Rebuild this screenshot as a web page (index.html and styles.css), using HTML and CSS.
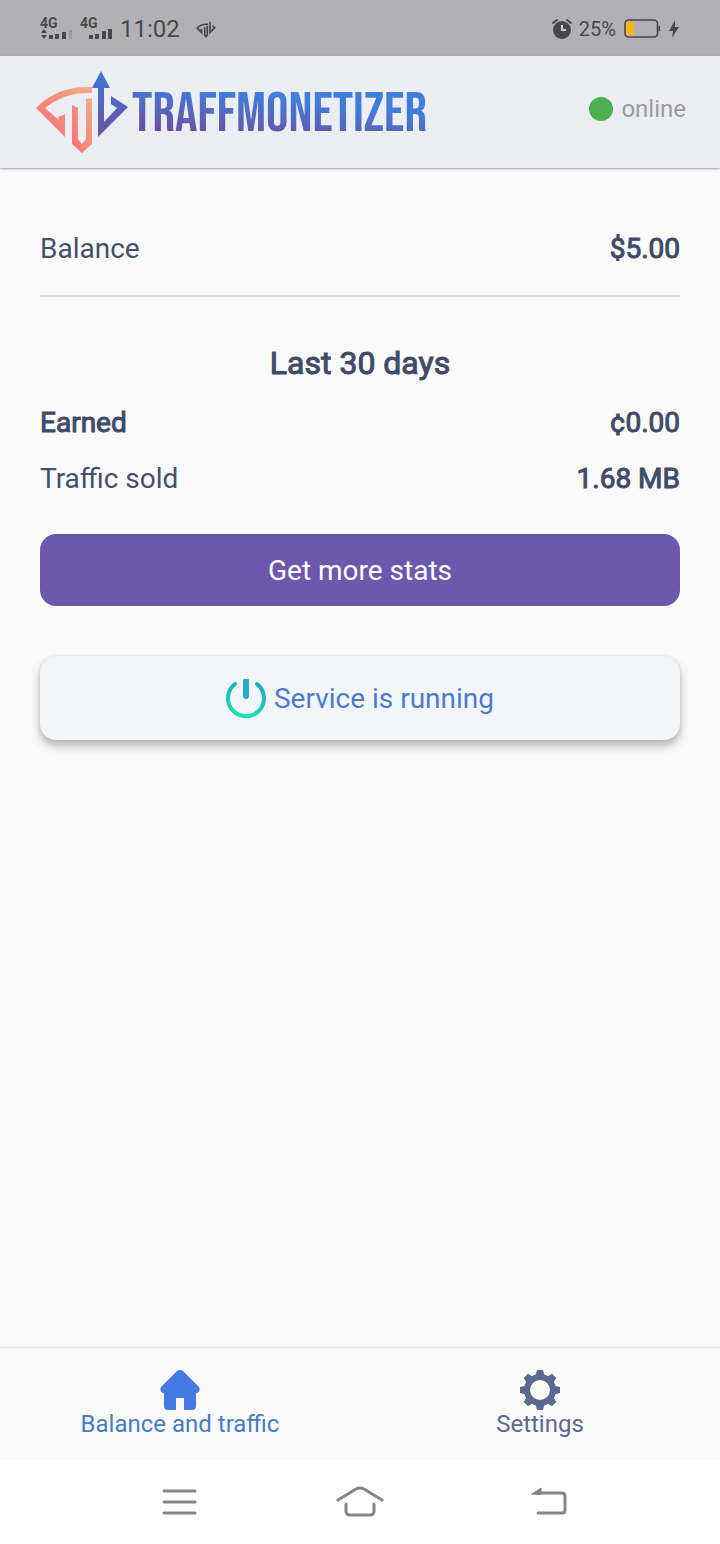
FILE: index.html
```html
<!DOCTYPE html>
<html lang="en">
<head>
  <meta charset="UTF-8">
  <meta name="viewport" content="width=device-width, initial-scale=1">
  <title>Traffmonetizer</title>
  <link rel="stylesheet" href="styles.css">
</head>
<body>

<!-- Phone status bar -->
<div class="status-bar">
  <div class="status-left">
    <div class="signal">
      <span class="network">4G</span>
      <svg width="32" height="12" viewBox="0 0 32 12">
        <path d="M1 4l3-4 3 4zM1 6l3 4 3-4z" fill="#48484b"/>
        <path d="M9 6h4v4H9zM15 5h4v5h-4zM22 3h4v7h-4z" fill="#48484b"/>
        <path d="M29 1h3v9h-3z" fill="#9b9b9f"/>
      </svg>
    </div>
    <div class="signal">
      <span class="network">4G</span>
      <svg width="32" height="12" viewBox="0 0 32 12">
        <path d="M9 6h4v4H9zM15 5h4v5h-4zM22 2h4v8h-4zM28 0h4v10h-4z" fill="#48484b"/>
      </svg>
    </div>
    <span class="time">11:02</span>
    <svg class="notification" width="20" height="18" viewBox="35 70 94 84" fill="none" stroke="#48484b" stroke-width="8">
      <path d="M91 90C70 88 54 94 41 108l20 20V116l-5 2M76 104v37l6 6 6-6V97"/>
      <path d="M101 78v50l22-22-10-9"/>
    </svg>
  </div>
  <div class="status-right">
    <svg width="22" height="22" viewBox="0 0 22 22">
      <circle cx="11" cy="12" r="9" fill="#48484b"/>
      <path d="M2 5l4-3M20 5l-4-3" stroke="#48484b" stroke-width="2" stroke-linecap="round"/>
      <path d="M11 7v5h4" fill="none" stroke="#d0d0d4" stroke-width="2"/>
    </svg>
    <span class="percent">25%</span>
    <svg class="battery" width="36" height="20" viewBox="0 0 36 20">
      <rect x="1" y="1" width="32.500" height="17" rx="3.500" fill="none" stroke="#48484b" stroke-width="1.600"/>
      <path d="M4 3h6v13H4q-2 0-2-2V5q0-2 2-2z" fill="#fbb50f"/>
      <path d="M35.200 7v5" stroke="#48484b" stroke-width="1.500"/>
    </svg>
    <svg width="12" height="20" viewBox="0 0 12 20"><path d="M7 1L1 12h4l-1 7 7-11H7z" fill="#48484b"/></svg>
  </div>
</div>

<header class="header">
  <div class="logo">
    <svg width="92" height="82" viewBox="36 70 92 82">
      <defs>
        <linearGradient id="warm" x1="0" y1="1" x2="1" y2="0">
          <stop offset="0" stop-color="#fa6d72"/>
          <stop offset="1" stop-color="#f3ad88"/>
        </linearGradient>
        <linearGradient id="cool" x1="0" y1="0" x2="0" y2="1">
          <stop offset="0" stop-color="#3b78dc"/>
          <stop offset="1" stop-color="#6c51a2"/>
        </linearGradient>
      </defs>
      <path d="M92 86V92C73 91 59 96 45 107L59 119L58 116L65 113V136L36 107C51 91 70 85 92 86Z" fill="url(#warm)"/>
      <path d="M72 104L78 107V138L82 143L86 138V98L92 97V143L82 152L72 143Z" fill="url(#warm)"/>
      <path d="M101 70L110 87H104V121L117 107L111 103V95L128 106L98 136V87H92Z" fill="url(#cool)"/>
    </svg>
    <span class="logo-text">TRAFFMONETIZER</span>
  </div>
  <div class="connection"><span class="dot"></span>online</div>
</header>

<main class="content">
  <div class="row balance">
    <span>Balance</span>
    <span class="strong">$5.00</span>
  </div>

  <h1 class="strong">Last 30 days</h1>
  <div class="row">
    <span class="strong">Earned</span>
    <span class="strong">¢0.00</span>
  </div>
  <div class="row">
    <span>Traffic sold</span>
    <span class="strong">1.68 MB</span>
  </div>

  <button class="stats-button" type="button">Get more stats</button>
  <button class="service-button" type="button">
    <svg width="40" height="40" viewBox="0 0 40 40" fill="none" stroke-linecap="round">
      <defs>
        <linearGradient id="power" gradientUnits="userSpaceOnUse" x1="24" y1="0" x2="16" y2="40">
          <stop offset="0" stop-color="#1ca5ce"/>
          <stop offset="1" stop-color="#20e3ae"/>
        </linearGradient>
      </defs>
      <path d="M9 5A18 18 0 1 0 31 5" stroke="url(#power)" stroke-width="4"/>
      <path d="M20 2L20.010 17" stroke="#1cb1c8" stroke-width="6"/>
    </svg>
    Service is running
  </button>
</main>

<nav class="tabs">
  <a href="#balance" class="active">
    <svg width="40" height="40" viewBox="0 0 40 40">
      <path d="M17 1Q20-1 23 1L39 17Q41 21 37 23H36V36Q36 40 32 40H24V28H16V40H8Q4 40 4 36V23H3Q-1 21 1 17Z" fill="#437be2"/>
    </svg>
    Balance and traffic
  </a>
  <a href="#settings">
    <svg width="40" height="40" viewBox="0 0 40 40" fill="#5b688f">
      <defs><path id="tooth" d="M15 8L17 0H23L25 8Z"/></defs>
      <circle cx="20" cy="20" r="13" fill="none" stroke="#5b688f" stroke-width="6"/>
      <use href="#tooth"/>
      <use href="#tooth" transform="rotate(45 20 20)"/>
      <use href="#tooth" transform="rotate(90 20 20)"/>
      <use href="#tooth" transform="rotate(135 20 20)"/>
      <use href="#tooth" transform="rotate(180 20 20)"/>
      <use href="#tooth" transform="rotate(225 20 20)"/>
      <use href="#tooth" transform="rotate(270 20 20)"/>
      <use href="#tooth" transform="rotate(315 20 20)"/>
    </svg>
    Settings
  </a>
</nav>

<!-- Phone navigation keys -->
<div class="system-nav">
  <button type="button" aria-label="Recent apps">
    <svg width="48" height="34" viewBox="0 0 48 34"><path d="M9 6h31M9 17h31M9 28h31"/></svg>
  </button>
  <button type="button" aria-label="Home">
    <svg width="48" height="34" viewBox="0 0 48 34"><path d="M2 15L20 4Q24 2 28 4L46 15M10 19V26Q10 30 14 30H34Q38 30 38 26V19"/></svg>
  </button>
  <button type="button" aria-label="Back">
    <svg width="56" height="34" viewBox="0 0 56 34"><path d="M24 8H49Q52 8 52 11V25Q52 28 49 28H25"/><path class="arrow" d="M19 9L28 3V9Z"/></svg>
  </button>
</div>

</body>
</html>
```
FILE: styles.css
```css
* {
  box-sizing: border-box;
}

body {
  font-family: Roboto, sans-serif;
  margin: 0;
  min-height: 100vh;
  display: flex;
  flex-direction: column;
  background-color: #fafafa;
  color: #46506b;
  font-size: 28px;
  line-height: 32px;
}

svg {
  display: block;
  flex-shrink: 0;
}

button {
  font: inherit;
  border: 0;
  cursor: pointer;
}

.status-bar {
  height: 56px;
  padding: 2px 40px 0;
  display: flex;
  align-items: center;
  justify-content: space-between;
  background-color: #b1b1b5;
  color: #48484b;
}

.status-left,
.status-right {
  display: flex;
  align-items: center;
}

.status-left {
  gap: 8px;
}

.status-right {
  gap: 6px;
}

.signal {
  display: flex;
  flex-direction: column;
}

.network {
  font-size: 14px;
  line-height: 12px;
  font-weight: 700;
}

.time {
  font-size: 24px;
}

.notification {
  margin-left: 8px;
}

.percent {
  font-size: 20px;
}

.battery {
  margin: 0 2px;
}

.header {
  height: 112px;
  padding: 0 34px 0 36px;
  display: flex;
  align-items: center;
  justify-content: space-between;
  background: linear-gradient(#ecedf2, #e9eff4);
  box-shadow: 0 1px 2px rgba(70, 60, 100, 0.5);
}

.logo {
  display: flex;
  align-items: center;
  gap: 4px;
}

.logo-text {
  padding-top: 6px;
  font-family: "Bebas Neue", "Roboto Condensed", "Liberation Sans Narrow", "Liberation Sans", sans-serif;
  font-size: 56px;
  line-height: 56px;
  font-weight: 400;
  color: transparent;
  background: linear-gradient(186deg, #3f7edb 35%, #6c51a2 80%);
  -webkit-background-clip: text;
  background-clip: text;
}

.connection {
  display: flex;
  align-items: center;
  gap: 8px;
  padding-bottom: 6px;
  font-size: 24px;
  color: #9b9ba1;
}

.dot {
  width: 24px;
  height: 24px;
  border-radius: 50%;
  background-color: #4caf50;
}

.content {
  flex: 1;
  padding: 48px 40px;
}

.row {
  display: flex;
  justify-content: space-between;
  align-items: center;
  min-height: 56px;
}

.balance {
  padding: 17px 0 30px;
  border-bottom: 2px solid #dadade;
}

.strong {
  color: #3f4b68;
  -webkit-text-stroke: 1px #3f4b68;
}

h1 {
  margin: 47px 0 13px;
  text-align: center;
  font-size: 32px;
  line-height: 38px;
  font-weight: 400;
}

.stats-button,
.service-button {
  width: 100%;
  border-radius: 16px;
  padding: 2px 0 0;
}

.stats-button {
  height: 72px;
  margin-top: 27px;
  background-color: #6c59ae;
  color: #fff;
}

.service-button {
  height: 84px;
  margin-top: 50px;
  display: flex;
  align-items: center;
  justify-content: center;
  gap: 8px;
  background-color: #f4f5f9;
  color: #497dc9;
  box-shadow: 0 6px 10px rgba(0, 0, 0, 0.28), 0 0 2px rgba(0, 0, 0, 0.12);
}

.tabs {
  display: flex;
  height: 112px;
  box-shadow: 0 -1px 2px rgba(0, 0, 0, 0.1);
}

.tabs a {
  flex: 1;
  display: flex;
  flex-direction: column;
  align-items: center;
  padding-top: 22px;
  color: #5b688f;
  font-size: 24px;
  line-height: 28px;
  text-decoration: none;
}

.tabs .active {
  color: #497dc0;
}

.system-nav {
  height: 84px;
  padding: 0 88px;
  display: flex;
  align-items: center;
  background-color: #fff;
}

.system-nav button {
  flex: 1;
  display: flex;
  justify-content: center;
  padding: 0;
  background: none;
}

.system-nav path {
  fill: none;
  stroke: #858585;
  stroke-width: 3;
  stroke-linecap: round;
}

.system-nav .arrow {
  fill: #858585;
  stroke-width: 1;
}
```
